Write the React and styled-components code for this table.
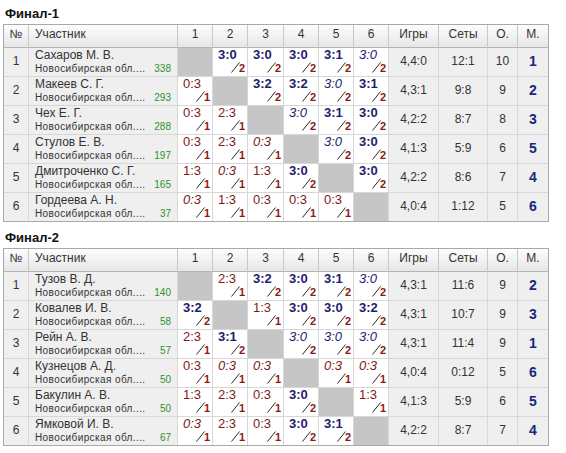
import React from 'react';
import styled, { createGlobalStyle } from 'styled-components';

const Global = createGlobalStyle`
  html, body { margin: 0; padding: 0; background: #fff; }
  body { font-family: "Liberation Sans", Arial, sans-serif; }
`;

const Page = styled.div`
  width: 566px;
  box-sizing: border-box;
  padding: 6px 0 0 3px;
`;

const Section = styled.section`
  & + & { margin-top: 8px; }
`;

const Title = styled.h2`
  margin: 0 0 2px 2px;
  font: bold 13px/16px "Liberation Sans", Arial, sans-serif;
  color: #111;
`;

const Table = styled.table`
  width: 544px;
  table-layout: fixed;
  border-collapse: separate;
  border-spacing: 0;
  border: 1px solid #a9a9a9;
  font-family: "Liberation Sans", Arial, sans-serif;
  color: #333;
`;

const Th = styled.th`
  padding: 0 0 3px;
  height: 19px;
  line-height: 19px;
  font-size: 12px;
  font-weight: normal;
  color: #333;
  text-align: ${p => (p.$left ? 'left' : 'center')};
  padding-left: ${p => (p.$left ? '6px' : '0')};
  background: linear-gradient(#fdfdfd, #e6e6e6);
  border-right: 1px solid #c8c8c8;
  border-bottom: 1px solid #b4b4b4;
  &:last-child { border-right: none; }
`;

const Td = styled.td`
  padding: 0;
  height: 28px;
  vertical-align: top;
  background: ${p => p.$bg || '#efefef'};
  border-right: 1px solid #d7d7d7;
  border-bottom: 1px solid #d7d7d7;
  tr:last-child > & { border-bottom: none; }
  &:last-child { border-right: none; }
`;

const Center = styled.div`
  height: 28px;
  line-height: 26px;
  text-align: center;
  font-size: ${p => (p.$place ? '14px' : '12px')};
  font-weight: ${p => (p.$place ? 'bold' : 'normal')};
  color: ${p => (p.$place ? '#1c2680' : '#333')};
`;

const NameBox = styled.div`
  height: 28px;
  padding: 0 6px;
  display: flex;
  flex-direction: column;
`;

const Name = styled.div`
  font-size: 12px;
  line-height: 14px;
  color: #333;
  white-space: nowrap;
`;

const Sub = styled.div`
  display: flex;
  justify-content: space-between;
  margin-top: 1px;
  font-size: 10px;
  line-height: 12px;
`;

const Region = styled.span`
  letter-spacing: 0.4px;
  color: #333;
`;

const Rating = styled.span`
  color: #2f8f2f;
`;

const ScoreBox = styled.div`
  height: 28px;
  display: flex;
  flex-direction: column;
  justify-content: space-between;
  padding-left: 5px;
`;

const Score = styled.span`
  font-size: 13px;
  line-height: 13px;
  font-weight: ${p => (p.$bold ? 'bold' : 'normal')};
  font-style: ${p => (p.$italic ? 'italic' : 'normal')};
  color: ${p => (p.$win ? '#1e1e6e' : '#7c1a1a')};
  white-space: nowrap;
`;

const Mark = styled.div`
  display: flex;
  justify-content: flex-end;
  align-items: flex-end;
  padding: 0 2px 2px 0;
  height: 11px;
`;

const Slash = styled.svg`
  display: block;
  margin: 0 -1px 1px 0;
`;

const SetNum = styled.span`
  font-size: 11px;
  line-height: 11px;
  font-weight: bold;
  color: #8a1a1a;
`;

const Empty = styled.div`
  height: 28px;
  background: #c6c6c6;
`;

const Sc = ({ v }) => {
  if (!v) return <Td $bg="#c6c6c6"><Empty /></Td>;
  const [score, kind] = v;
  const win = kind[0] === 'w';
  const italic = kind.includes('i');
  return (
    <Td $bg="#fff">
      <ScoreBox>
        <Score $win={win} $bold={win && !italic} $italic={italic}>{score}</Score>
        <Mark>
          <Slash width="9" height="11" viewBox="0 0 9 11">
            <line x1="0.5" y1="10.5" x2="8.5" y2="0.5" stroke="#2a2a2a" strokeWidth="1" />
          </Slash>
          <SetNum>{win ? 2 : 1}</SetNum>
        </Mark>
      </ScoreBox>
    </Td>
  );
};

const REGION = 'Новосибирская обл....';

const final1 = [
  ['Сахаров М. В.', 338, [null, ['3:0', 'w'], ['3:0', 'w'], ['3:0', 'w'], ['3:1', 'w'], ['3:0', 'wi']], '4,4:0', '12:1', 10, 1],
  ['Макеев С. Г.', 293, [['0:3', 'l'], null, ['3:2', 'w'], ['3:2', 'w'], ['3:0', 'wi'], ['3:1', 'w']], '4,3:1', '9:8', 9, 2],
  ['Чех Е. Г.', 288, [['0:3', 'l'], ['2:3', 'l'], null, ['3:0', 'wi'], ['3:1', 'w'], ['3:0', 'w']], '4,2:2', '8:7', 8, 3],
  ['Стулов Е. В.', 197, [['0:3', 'l'], ['2:3', 'l'], ['0:3', 'li'], null, ['3:0', 'wi'], ['3:0', 'w']], '4,1:3', '5:9', 6, 5],
  ['Дмитроченко С. Г.', 165, [['1:3', 'l'], ['0:3', 'li'], ['1:3', 'l'], ['3:0', 'w'], null, ['3:0', 'w']], '4,2:2', '8:6', 7, 4],
  ['Гордеева А. Н.', 37, [['0:3', 'li'], ['1:3', 'l'], ['0:3', 'l'], ['0:3', 'l'], ['0:3', 'l'], null], '4,0:4', '1:12', 5, 6],
];

const final2 = [
  ['Тузов В. Д.', 140, [null, ['2:3', 'l'], ['3:2', 'w'], ['3:0', 'w'], ['3:1', 'w'], ['3:0', 'wi']], '4,3:1', '11:6', 9, 2],
  ['Ковалев И. В.', 58, [['3:2', 'w'], null, ['1:3', 'l'], ['3:0', 'w'], ['3:0', 'w'], ['3:2', 'w']], '4,3:1', '10:7', 9, 3],
  ['Рейн А. В.', 57, [['2:3', 'l'], ['3:1', 'w'], null, ['3:0', 'wi'], ['3:0', 'wi'], ['3:0', 'wi']], '4,3:1', '11:4', 9, 1],
  ['Кузнецов А. Д.', 50, [['0:3', 'l'], ['0:3', 'li'], ['0:3', 'li'], null, ['0:3', 'li'], ['0:3', 'li']], '4,0:4', '0:12', 5, 6],
  ['Бакулин А. В.', 50, [['1:3', 'l'], ['2:3', 'l'], ['0:3', 'l'], ['3:0', 'w'], null, ['1:3', 'l']], '4,1:3', '5:9', 6, 5],
  ['Ямковой И. В.', 67, [['0:3', 'li'], ['2:3', 'l'], ['0:3', 'l'], ['3:0', 'w'], ['3:1', 'w'], null], '4,2:2', '8:7', 7, 4],
];

const widths = [25, 149, 35, 35, 36, 35, 35, 35, 50, 49, 30, 30];

const Group = ({ title, rows }) => (
  <Section>
    <Title>{title}</Title>
    <Table>
      <colgroup>
        {widths.map((w, i) => <col key={i} style={{ width: w }} />)}
      </colgroup>
      <thead>
        <tr>
          <Th>№</Th>
          <Th $left>Участник</Th>
          {[1, 2, 3, 4, 5, 6].map(n => <Th key={n}>{n}</Th>)}
          <Th>Игры</Th>
          <Th>Сеты</Th>
          <Th>О.</Th>
          <Th>М.</Th>
        </tr>
      </thead>
      <tbody>
        {rows.map(([name, rating, cells, games, sets, pts, place], i) => (
          <tr key={i}>
            <Td><Center>{i + 1}</Center></Td>
            <Td>
              <NameBox>
                <Name>{name}</Name>
                <Sub><Region>{REGION}</Region><Rating>{rating}</Rating></Sub>
              </NameBox>
            </Td>
            {cells.map((c, j) => <Sc key={j} v={c} />)}
            <Td><Center>{games}</Center></Td>
            <Td><Center>{sets}</Center></Td>
            <Td><Center>{pts}</Center></Td>
            <Td><Center $place>{place}</Center></Td>
          </tr>
        ))}
      </tbody>
    </Table>
  </Section>
);

export default function App() {
  return (
    <>
      <Global />
      <Page>
        <Group title="Финал-1" rows={final1} />
        <Group title="Финал-2" rows={final2} />
      </Page>
    </>
  );
}
